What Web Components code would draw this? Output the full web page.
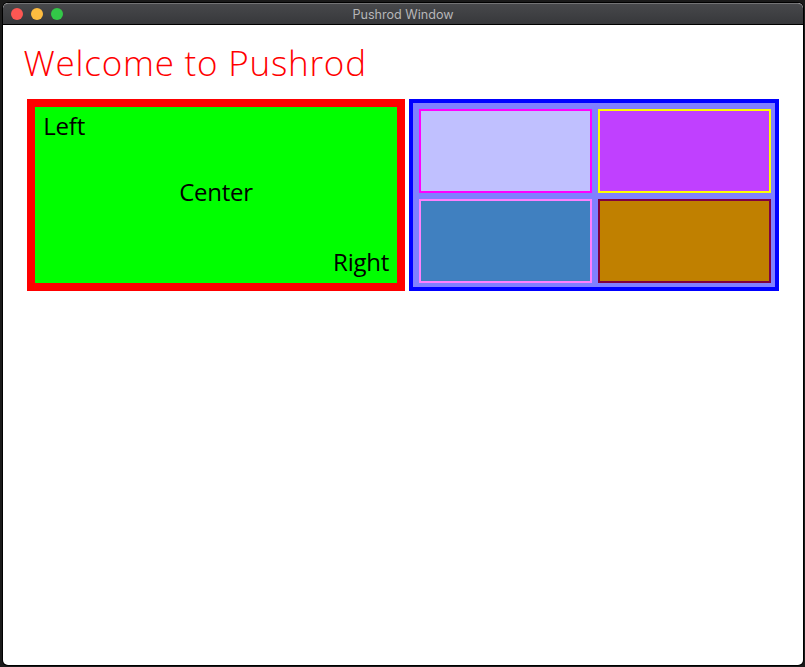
<!DOCTYPE html>
<html lang="en">
<head>
<meta charset="utf-8">
<title>Pushrod Window</title>
<style>
html, body { margin: 0; height: 100%; background: #1a1a1a; overflow: hidden; }
body { box-sizing: border-box; padding: 3px 2px 2px 3px; font-family: "Open Sans", "Noto Sans", sans-serif; }
</style>
</head>
<body>
<app-window></app-window>
<script>
const define = (name, html) => {
  const template = document.createElement('template');
  template.innerHTML = html;
  customElements.define(name, class extends HTMLElement {
    constructor() {
      super();
      this.attachShadow({ mode: 'open' }).append(template.content.cloneNode(true));
    }
  });
};

define('title-bar', `
<style>
:host { display: grid; grid-template-columns: 1fr auto 1fr; align-items: center; box-sizing: border-box; height: 22px;
  background: linear-gradient(#47484b, #37383b); border-top: 1px solid #747476; border-bottom: 1px solid #000;
  border-radius: 5px 5px 0 0; color: #b6b6b8; font: 12.6px/20px Inter, "Liberation Sans", sans-serif; }
.lights { display: flex; gap: 8px; padding-left: 8px; }
i { width: 12px; height: 12px; border-radius: 50%; background: #fc5753; }
i:nth-child(2) { background: #fdbc40; }
i:nth-child(3) { background: #33c748; }
span { padding-top: 1px; line-height: 19px; }
</style>
<div class="lights"><i></i><i></i><i></i></div><span><slot></slot></span>`);

define('text-widget', `
<style>
:host { display: block; font-size: 24px; line-height: 32px; letter-spacing: -.25px; color: #000; white-space: nowrap; }
:host([heading]) { font-size: 35px; line-height: 48px; font-weight: 300; letter-spacing: .78px; color: #f00; }
</style>
<slot></slot>`);

define('label-box', `
<style>
:host { display: flex; flex-direction: column; justify-content: space-between; box-sizing: border-box;
  width: 378px; height: 192px; padding: 3px 8px 5px; border: 8px solid #f00; background: #0f0; }
</style>
<slot></slot>`);

define('color-cell', `
<style>
:host { display: block; box-sizing: border-box; border: 2px solid var(--edge); background: var(--fill); }
</style>`);

define('color-grid', `
<style>
:host { display: grid; grid-template-columns: 173px 173px; grid-template-rows: 84px 84px; gap: 6px;
  box-sizing: border-box; width: 370px; height: 192px; padding: 6px 4px 4px 6px; border: 4px solid #00f; background: #8080ff; }
</style>
<slot></slot>`);

define('app-window', `
<style>
:host { display: flex; flex-direction: column; box-sizing: border-box; height: 662px; border-radius: 5px; overflow: hidden;
  background: #fff; box-shadow: 0 0 0 1px #000; }
.title { margin: 14px 0 0 20.6px; }
.row { display: flex; gap: 4px; margin: 12px 0 0 24px; }
.l { margin-left: .3px; }
.c { align-self: center; margin: -5px 0 0; }
.r { align-self: flex-end; }
</style>
<title-bar>Pushrod Window</title-bar>
<text-widget class="title" heading>Welcome to Pushrod</text-widget>
<div class="row">
  <label-box>
    <text-widget class="l">Left</text-widget>
    <text-widget class="c">Center</text-widget>
    <text-widget class="r">Right</text-widget>
  </label-box>
  <color-grid>
    <color-cell style="--edge:#f0f;--fill:#c0c0ff"></color-cell>
    <color-cell style="--edge:#ff0;--fill:#c040ff"></color-cell>
    <color-cell style="--edge:#ff80ff;--fill:#4080c0"></color-cell>
    <color-cell style="--edge:#800040;--fill:#c08000"></color-cell>
  </color-grid>
</div>`);
</script>
</body>
</html>
